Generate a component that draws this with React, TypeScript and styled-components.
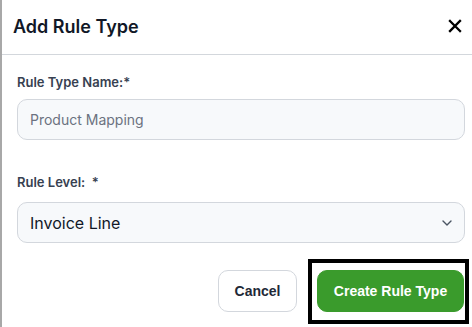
import React from "react";
import styled, { createGlobalStyle } from "styled-components";

const GlobalStyle = createGlobalStyle`
  html, body {
    margin: 0;
    padding: 0;
    background: #ffffff;
  }
  * {
    box-sizing: border-box;
  }
`;

const Dialog = styled.div`
  position: relative;
  width: 472px;
  height: 327px;
  background: #ffffff;
  border-left: 2px solid #a8a8a8;
  font-family: Inter, "Noto Sans", sans-serif;
  display: flex;
  flex-direction: column;
  overflow: hidden;
`;

const Header = styled.div`
  height: 55px;
  display: flex;
  align-items: center;
  justify-content: space-between;
  padding: 0 7px 2px 11px;
  border-bottom: 1px solid #d3d7dc;
`;

const Title = styled.h2`
  margin: 0;
  font-size: 18px;
  font-weight: 600;
  color: #111827;
`;

const CloseButton = styled.button`
  width: 20px;
  height: 20px;
  padding: 0;
  border: none;
  background: transparent;
  display: flex;
  align-items: center;
  justify-content: center;
  cursor: pointer;
`;

const Body = styled.div`
  display: flex;
  flex-direction: column;
  padding: 19px 7px 0 15px;
`;

const Label = styled.label<{ $gap: number }>`
  display: block;
  font-size: 13px;
  line-height: 16px;
  font-weight: 600;
  color: #374151;
  margin-bottom: ${(p) => p.$gap}px;
  white-space: pre;
`;

const Field = styled.div`
  position: relative;
  height: 41px;
  display: flex;
  align-items: center;
  padding: 0 12px;
  background: #f7f9fb;
  border: 1px solid #d3d7dd;
  border-radius: 10px;
`;

const Placeholder = styled.span`
  font-size: 14px;
  color: #6b7280;
`;

const Value = styled.span`
  flex: 1;
  font-size: 16px;
  color: #111827;
`;

const Spacer = styled.div<{ $h: number }>`
  height: ${(p) => p.$h}px;
`;

const Footer = styled.div`
  display: flex;
  justify-content: flex-end;
  gap: 20px;
  padding: 27px 1px 0 0;
`;

const Button = styled.button<{ $primary?: boolean }>`
  height: 42px;
  padding: 0;
  border-radius: 10px;
  font-family: "Liberation Sans", Arial, sans-serif;
  font-size: 14px;
  font-weight: 700;
  white-space: nowrap;
  cursor: pointer;
  border: 1px solid ${(p) => (p.$primary ? "#3a9b2c" : "#d3d7dd")};
  background: ${(p) => (p.$primary ? "#3a9b2c" : "#ffffff")};
  color: ${(p) => (p.$primary ? "#ffffff" : "#1f2937")};
  width: ${(p) => (p.$primary ? 147 : 79)}px;
`;

const Highlight = styled.div`
  position: absolute;
  left: 306px;
  top: 259px;
  width: 161px;
  height: 65px;
  border: 4px solid #000000;
  pointer-events: none;
`;

const App: React.FC = () => {
  return (
    <>
      <GlobalStyle />
      <Dialog>
        <Header>
          <Title>Add Rule Type</Title>
          <CloseButton aria-label="Close">
            <svg width="14" height="14" viewBox="0 0 14 14">
              <path
                d="M2 2 L12 12 M12 2 L2 12"
                stroke="#000"
                strokeWidth="2.3"
                strokeLinecap="square"
              />
            </svg>
          </CloseButton>
        </Header>
        <Body>
          <Label $gap={9}>Rule Type Name:*</Label>
          <Field>
            <Placeholder>Product Mapping</Placeholder>
          </Field>
          <Spacer $h={34} />
          <Label $gap={12}>Rule Level:  *</Label>
          <Field>
            <Value>Invoice Line</Value>
            <svg width="10" height="6" viewBox="0 0 10 6">
              <path
                d="M1 1 L5 5 L9 1"
                fill="none"
                stroke="#4b5563"
                strokeWidth="1.4"
                strokeLinecap="round"
                strokeLinejoin="round"
              />
            </svg>
          </Field>
          <Footer>
            <Button>Cancel</Button>
            <Button $primary>Create Rule Type</Button>
          </Footer>
        </Body>
        <Highlight />
      </Dialog>
    </>
  );
};

export default App;
